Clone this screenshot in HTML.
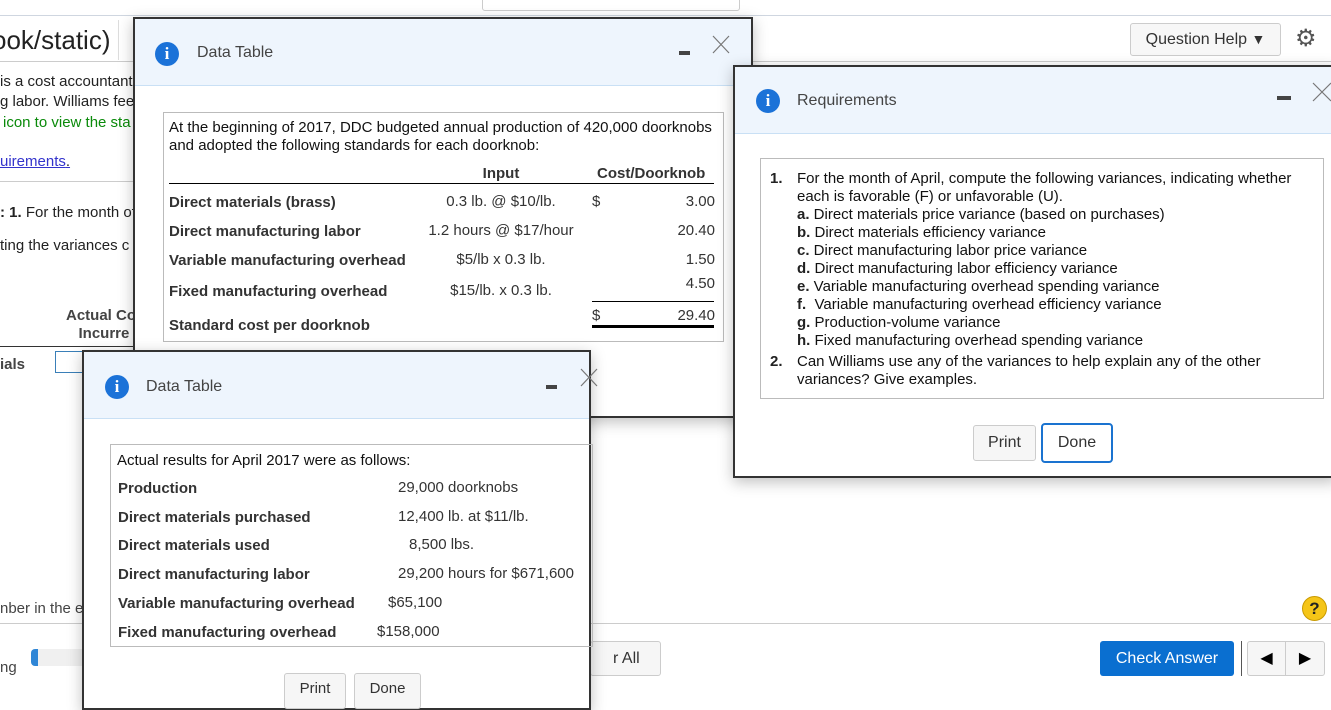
<!DOCTYPE html>
<html><head><meta charset="utf-8"><style>
*{box-sizing:border-box;margin:0;padding:0}
body{width:1331px;height:694px;overflow:hidden;background:#fff;font-family:"Liberation Sans",Arial,sans-serif;position:relative;color:#222}
.a{position:absolute;white-space:nowrap}
.dlg{position:absolute;background:#fff;border:2px solid #333;box-shadow:0 4px 14px rgba(0,0,0,.25)}
.hdr{position:absolute;left:0;right:0;top:0;background:#eef5fd;border-bottom:1px solid #c9e0f5}
.ic{position:absolute;width:24px;height:24px;border-radius:50%;background:#1b72d8;color:#fff;font:bold 17px "Liberation Serif",serif;text-align:center;line-height:24px}
.ttl{position:absolute;font-size:16px;color:#444}
.min{position:absolute;width:11px;height:4px;background:#444}
.box{position:absolute;border:1px solid #bbb;font-size:15px;color:#111}
.btn{position:absolute;border:1px solid #ccc;border-radius:3px;background:#f6f6f6;font-size:16px;color:#333;text-align:center}
.c{text-align:center;width:200px}
.r{text-align:right;right:8px}
b{font-weight:bold;color:#333}
</style></head><body>
<div class="a" style="left:0;top:0;width:1331px;height:16px;border-bottom:1px solid #cfd6e0"></div>
<div class="btn" style="left:482px;top:-4px;width:258px;height:15px;background:#fff"></div>
<div class="a" style="left:-8px;top:25px;font-size:26px;color:#222">ook/static)</div>
<div class="a" style="left:118px;top:20px;width:1px;height:40px;background:#ddd"></div>
<div class="a" style="left:0;top:61px;width:1331px;height:1px;background:#ccc"></div>
<div class="btn" style="left:1130px;top:23px;width:151px;height:33px;line-height:31px;background:#f7f7f7">Question Help <span style="font-size:14px">▼</span></div>
<div class="a" style="left:1295px;top:24px;font-size:24px;color:#555">⚙</div>
<div class="a" style="left:0;top:72px;font-size:15px;line-height:20px">is a cost accountant<br>g labor. Williams feel</div>
<div class="a" style="left:3px;top:114px;font-size:15px;color:#0a8a0a">icon to view the sta</div>
<div class="a" style="left:0;top:153px;font-size:15px;color:#33c;text-decoration:underline">uirements<span style="color:#222;text-decoration:none">.</span></div>
<div class="a" style="left:0;top:181px;width:135px;height:1px;background:#ccc"></div>
<div class="a" style="left:0;top:204px;font-size:15px"><b style="color:#222">: 1.</b> For the month of</div>
<div class="a" style="left:0;top:237px;font-size:15px">ting the variances c</div>
<div class="a" style="left:66px;top:307px;font-size:15px;font-weight:bold;color:#444;line-height:18px">Actual Co<br>&nbsp;&nbsp;&nbsp;Incurre</div>
<div class="a" style="left:0;top:346px;width:135px;height:1px;background:#333"></div>
<div class="a" style="left:0;top:356px;font-size:15px;font-weight:bold;color:#444">ials</div>
<div class="a" style="left:55px;top:351px;width:30px;height:22px;border:1px solid #3a7fb8;border-right:none"></div>
<div class="a" style="left:0;top:600px;font-size:15px;color:#444">nber in the e</div>
<div class="a" style="left:0;top:623px;width:1331px;height:1px;background:#ccc"></div>
<div class="a" style="left:1302px;top:596px;width:25px;height:25px;border-radius:50%;background:#f5c518;border:1px solid #c99a00;text-align:center;font:bold 17px/23px 'Liberation Sans';color:#222">?</div>
<div class="a" style="left:0;top:659px;font-size:15px;color:#444">ng</div>
<div class="a" style="left:31px;top:649px;width:60px;height:17px;border-radius:4px;background:#f0f0f0;border-left:7px solid #2f86d6"></div>
<div class="btn" style="left:590px;top:641px;width:71px;height:35px;line-height:33px;text-align:left;padding-left:22px">r All</div>
<div class="a" style="left:1100px;top:641px;width:134px;height:35px;border-radius:3px;background:#0a6fd0;color:#fff;font-size:16px;line-height:35px;text-align:center">Check Answer</div>
<div class="a" style="left:1241px;top:641px;width:1px;height:35px;background:#555"></div>
<div class="btn" style="left:1247px;top:641px;width:78px;height:35px;line-height:33px;font-size:16px;color:#000"><span style="display:inline-block;width:38px;border-right:1px solid #ccc">◀</span><span style="display:inline-block;width:38px">▶</span></div>

<div class="dlg" style="left:133px;top:17px;width:620px;height:401px">
 <div class="hdr" style="height:67px"></div>
 <div class="ic" style="left:20px;top:23px">i</div>
 <div class="ttl" style="left:62px;top:25px">Data Table</div>
 <div class="min" style="left:544px;top:32px"></div>
 <svg class="a" style="left:577px;top:16px" width="18" height="19"><path d="M1 1L17 18M17 1L1 18" stroke="#777" stroke-width="1.2"/></svg>
 <div class="box" style="left:28px;top:93px;width:561px;height:230px">
  <div class="a" style="left:5px;top:6px;line-height:18px">At the beginning of 2017, DDC budgeted annual production of 420,000 doorknobs<br>and adopted the following standards for each doorknob:</div>
  <div class="a c" style="left:237px;top:52px;font-weight:bold;color:#333">Input</div>
  <div class="a" style="left:433px;top:52px;font-weight:bold;color:#333">Cost/Doorknob</div>
  <div class="a" style="left:5px;top:70px;width:545px;height:1px;background:#000"></div>
  <div class="a" style="left:5px;top:81px"><b>Direct materials (brass)</b></div>
  <div class="a c" style="left:237px;top:80px;color:#333">0.3 lb. @ $10/lb.</div>
  <div class="a" style="left:428px;top:80px;color:#333">$</div>
  <div class="a r" style="top:80px;color:#333">3.00</div>
  <div class="a" style="left:5px;top:110px"><b>Direct manufacturing labor</b></div>
  <div class="a c" style="left:237px;top:109px;color:#333">1.2 hours @ $17/hour</div>
  <div class="a r" style="top:109px;color:#333">20.40</div>
  <div class="a" style="left:5px;top:139px"><b>Variable manufacturing overhead</b></div>
  <div class="a c" style="left:237px;top:138px;color:#333">$5/lb x 0.3 lb.</div>
  <div class="a r" style="top:138px;color:#333">1.50</div>
  <div class="a" style="left:5px;top:170px"><b>Fixed manufacturing overhead</b></div>
  <div class="a c" style="left:237px;top:169px;color:#333">$15/lb. x 0.3 lb.</div>
  <div class="a r" style="top:162px;color:#333">4.50</div>
  <div class="a" style="left:428px;top:188px;width:122px;height:1px;background:#000"></div>
  <div class="a" style="left:5px;top:204px"><b>Standard cost per doorknob</b></div>
  <div class="a" style="left:428px;top:194px;color:#333">$</div>
  <div class="a r" style="top:194px;color:#333">29.40</div>
  <div class="a" style="left:428px;top:212px;width:122px;height:3px;background:#000"></div>
 </div>
</div>

<div class="dlg" style="left:733px;top:65px;width:604px;height:413px">
 <div class="hdr" style="height:67px"></div>
 <div class="ic" style="left:21px;top:22px">i</div>
 <div class="ttl" style="left:62px;top:25px">Requirements</div>
 <div class="min" style="left:542px;top:29px;width:14px"></div>
 <svg class="a" style="left:577px;top:15px" width="20" height="20"><path d="M1 1L19 19M19 1L1 19" stroke="#777" stroke-width="1.2"/></svg>
 <div class="box" style="left:25px;top:91px;width:564px;height:241px;line-height:18px">
  <div class="a" style="left:9px;top:11px"><b style="color:#222">1.</b></div>
  <div class="a" style="left:36px;top:11px">For the month of April, compute the following variances, indicating whether<br>each is favorable (F) or unfavorable (U).<br><b style="color:#222">a.</b> Direct materials price variance (based on purchases)<br><b style="color:#222">b.</b> Direct materials efficiency variance<br><b style="color:#222">c.</b> Direct manufacturing labor price variance<br><b style="color:#222">d.</b> Direct manufacturing labor efficiency variance<br><b style="color:#222">e.</b> Variable manufacturing overhead spending variance<br><b style="color:#222">f.</b>&nbsp; Variable manufacturing overhead efficiency variance<br><b style="color:#222">g.</b> Production-volume variance<br><b style="color:#222">h.</b> Fixed manufacturing overhead spending variance</div>
  <div class="a" style="left:9px;top:194px"><b style="color:#222">2.</b></div>
  <div class="a" style="left:36px;top:194px">Can Williams use any of the variances to help explain any of the other<br>variances? Give examples.</div>
 </div>
 <div class="btn" style="left:238px;top:358px;width:63px;height:36px;line-height:34px">Print</div>
 <div class="btn" style="left:306px;top:356px;width:72px;height:40px;line-height:36px;background:#fff;border:2px solid #1a73d0;border-radius:4px">Done</div>
</div>

<div class="dlg" style="left:82px;top:350px;width:509px;height:360px">
 <div class="hdr" style="height:67px"></div>
 <div class="ic" style="left:21px;top:23px">i</div>
 <div class="ttl" style="left:62px;top:26px">Data Table</div>
 <div class="min" style="left:462px;top:33px"></div>
 <svg class="a" style="left:496px;top:16px" width="18" height="19"><path d="M1 1L17 18M17 1L1 18" stroke="#777" stroke-width="1.2"/></svg>
 <div class="box" style="left:26px;top:92px;width:483px;height:203px">
  <div class="a" style="left:6px;top:7px">Actual results for April 2017 were as follows:</div>
  <div class="a" style="left:7px;top:35px"><b>Production</b></div>
  <div class="a" style="left:287px;top:34px;color:#333">29,000 doorknobs</div>
  <div class="a" style="left:7px;top:64px"><b>Direct materials purchased</b></div>
  <div class="a" style="left:287px;top:63px;color:#333">12,400 lb. at $11/lb.</div>
  <div class="a" style="left:7px;top:92px"><b>Direct materials used</b></div>
  <div class="a" style="left:298px;top:91px;color:#333">8,500 lbs.</div>
  <div class="a" style="left:7px;top:121px"><b>Direct manufacturing labor</b></div>
  <div class="a" style="left:287px;top:120px;color:#333">29,200 hours for $671,600</div>
  <div class="a" style="left:7px;top:150px"><b>Variable manufacturing overhead</b></div>
  <div class="a" style="left:277px;top:149px;color:#333">$65,100</div>
  <div class="a" style="left:7px;top:179px"><b>Fixed manufacturing overhead</b></div>
  <div class="a" style="left:266px;top:178px;color:#333">$158,000</div>
 </div>
 <div class="btn" style="left:200px;top:321px;width:62px;height:36px;line-height:30px;font-size:15px">Print</div>
 <div class="btn" style="left:270px;top:321px;width:67px;height:36px;line-height:30px;font-size:15px">Done</div>
</div>
</body></html>
